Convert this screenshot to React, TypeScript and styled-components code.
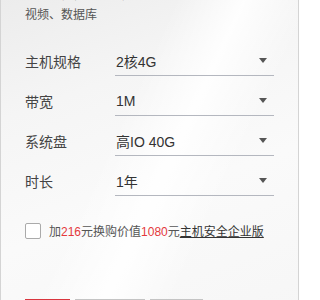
import styled, { createGlobalStyle } from "styled-components";

const GlobalStyle = createGlobalStyle`
  html, body {
    margin: 0;
    padding: 0;
    background: #ffffff;
    overflow: hidden;
  }
  body {
    font-family: "Liberation Sans", "Noto Sans CJK SC", sans-serif;
    color: #333;
  }
`;

const Panel = styled.div`
  width: 299px;
  height: 340px;
  box-sizing: border-box;
  margin-top: -15px;
  padding: 0 24px;
  border-left: 1px solid #d4d4d4;
  border-right: 1px solid #d4d4d4;
  background:
    linear-gradient(115deg, rgba(255, 255, 255, 0) 40%, rgba(255, 255, 255, 0.9) 55%, rgba(255, 255, 255, 0) 70%),
    linear-gradient(160deg, #ebebeb 0%, #f5f5f5 30%, #fafafa 60%, #f6f6f6 100%);
`;

const Desc = styled.div`
  font-size: 12px;
  line-height: 20px;
  color: #555;
  margin-bottom: 21px;
`;

const Row = styled.div`
  display: flex;
  align-items: center;
  height: 30px;
  margin-bottom: 10px;
`;

const Label = styled.div`
  width: 90px;
  font-size: 14px;
  color: #444;
`;

const Select = styled.div`
  width: 159px;
  height: 30px;
  box-sizing: border-box;
  display: flex;
  align-items: center;
  justify-content: space-between;
  padding: 0 7px 0 1px;
  border-bottom: 1px solid #b4b7bf;
  font-size: 14px;
  color: #333;
`;

const Arrow = () => (
  <svg width="8" height="5" viewBox="0 0 8 5">
    <path d="M0 0 H8 L4 5 Z" fill="#555" />
  </svg>
);

const CheckRow = styled.label`
  display: flex;
  align-items: center;
  margin-top: 26px;
  font-size: 12px;
  color: #555;
`;

const Box = styled.span`
  width: 16px;
  height: 16px;
  box-sizing: border-box;
  border: 1px solid #aaa;
  border-radius: 2px;
  background: #fff;
  margin-right: 8px;
`;

const Red = styled.span`
  color: #e4393c;
`;

const Link = styled.span`
  color: #333;
  text-decoration: underline;
`;

const Buttons = styled.div`
  display: flex;
  gap: 5px;
  margin-top: 60px;
`;

const Btn = styled.div<{ $w: number; $primary?: boolean }>`
  width: ${(p) => p.$w}px;
  height: 30px;
  background: ${(p) => (p.$primary ? "#d9363e" : "#c4c4c4")};
`;

const rows = [
  { label: "主机规格", value: "2核4G" },
  { label: "带宽", value: "1M" },
  { label: "系统盘", value: "高IO 40G" },
  { label: "时长", value: "1年" },
];

export default function App() {
  return (
    <>
      <GlobalStyle />
      <Panel>
        <Desc>
          企业级，性能稳定，适用于游戏、电商、
          <br />
          视频、数据库
        </Desc>
        {rows.map((r) => (
          <Row key={r.label}>
            <Label>{r.label}</Label>
            <Select>
              <span>{r.value}</span>
              <Arrow />
            </Select>
          </Row>
        ))}
        <CheckRow>
          <Box />
          <span>
            加<Red>216</Red>元换购价值<Red>1080</Red>元<Link>主机安全企业版</Link>
          </span>
        </CheckRow>
        <Buttons>
          <Btn $w={45} $primary />
          <Btn $w={70} />
          <Btn $w={53} />
        </Buttons>
      </Panel>
    </>
  );
}
